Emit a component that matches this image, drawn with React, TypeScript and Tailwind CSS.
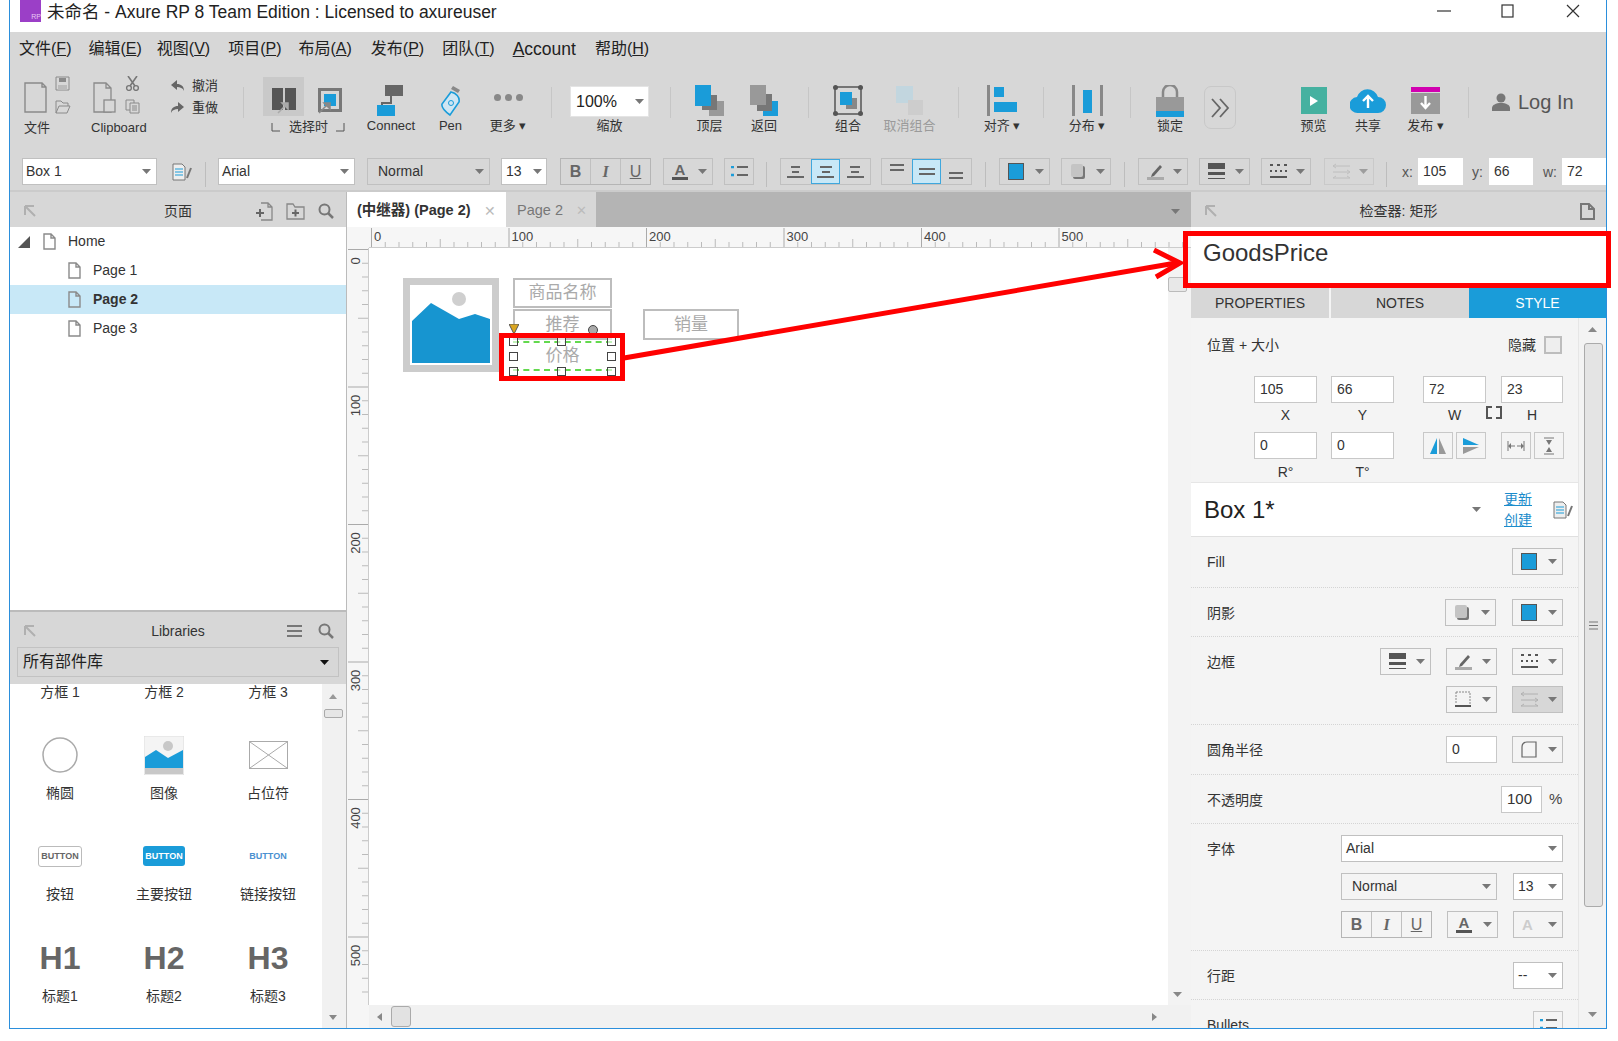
import * as React from "react"

const BLUE = "#1a9cd9"

function Svg({ w, h, children, className }: { w: number; h: number; children: React.ReactNode; className?: string }) {
    return (
        <svg width={w} height={h} viewBox={`0 0 ${w} ${h}`} fill="none" className={`shrink-0 ${className ?? ""}`}>
            {children}
        </svg>
    )
}

function Caret({ color = "#777" }: { color?: string }) {
    return (
        <Svg w={9} h={5}>
            <path d="M0 0h9L4.5 5z" fill={color} />
        </Svg>
    )
}

function Page({ w = 13, h = 17, color = "#8a8a8a" }: { w?: number; h?: number; color?: string }) {
    return (
        <Svg w={w} h={h}>
            <path d={`M1 1h${w - 6}l4 4v${h - 6}H1z M${w - 5} 1v4h4`} stroke={color} strokeWidth={1.4} />
        </Svg>
    )
}

function Sep() {
    return <div className="mt-[25px] h-[31px] w-px shrink-0 bg-[#c6c6c6]" />
}

function Tool({ className, icon, label, dim }: { className: string; icon: React.ReactNode; label: React.ReactNode; dim?: boolean }) {
    return (
        <div className={`flex shrink-0 flex-col items-center ${className}`}>
            <div className="mt-[23px] flex h-[31px] items-center justify-center">{icon}</div>
            <div className={`mt-px text-[13px] leading-[18px] whitespace-nowrap ${dim ? "text-[#9a9a9a]" : "text-[#333]"}`}>{label}</div>
        </div>
    )
}

function Drop({ className, children }: { className?: string; children?: React.ReactNode }) {
    return (
        <div className={`flex h-[27px] shrink-0 items-center justify-between border border-[#c0c0c0] pr-[5px] pl-[8px] ${className ?? ""}`}>
            <div className="flex items-center">{children}</div>
            <Caret />
        </div>
    )
}

function TextBox({ className, children }: { className?: string; children?: React.ReactNode }) {
    return <div className={`flex h-[27px] shrink-0 items-center border border-[#c8c8c8] bg-white pl-[5px] text-[14px] text-[#333] ${className ?? ""}`}>{children}</div>
}

function FillSwatch() {
    return <div className="h-[17px] w-[16px] border border-[#555] bg-[#1a9cd9]" />
}

function ShadowIcon() {
    return (
        <Svg w={16} h={17}>
            <rect x="3" y="3" width="12" height="13" rx="2" fill="#777" />
            <rect x="1" y="1" width="12" height="13" rx="2" fill="#c4c4c4" />
        </Svg>
    )
}

function PenIcon() {
    return (
        <Svg w={17} h={17}>
            <path d="M5 11l8-9 2 2-8 9-3 1z" fill="#666" />
            <rect x="0" y="14" width="17" height="3" fill="#aaa" />
        </Svg>
    )
}

function ThickIcon() {
    return (
        <Svg w={17} h={17}>
            <rect width="17" height="6" fill="#555" />
            <rect y="9" width="17" height="3" fill="#555" />
            <rect y="15" width="17" height="1" fill="#555" />
        </Svg>
    )
}

function DashIcon() {
    return (
        <Svg w={17} h={17}>
            <path d="M0 2h3M7 2h3M14 2h3M0 8h2M5 8h2M10 8h2M15 8h2" stroke="#555" strokeWidth="2" />
            <path d="M0 14h17" stroke="#555" strokeWidth="2" />
        </Svg>
    )
}

function ArrowsIcon({ color = "#b0b0b0" }: { color?: string }) {
    return (
        <Svg w={17} h={17}>
            <path d="M0 3h17M0 9h17M0 15h17M0 3l3-2M0 3l3 2M17 9l-3-2M17 9l-3 2M0 15l3-2M17 15l-3-2" stroke={color} />
        </Svg>
    )
}

function EditDoc() {
    return (
        <Svg w={20} h={18}>
            <path d="M1 1h9l3 3v13H1z" stroke="#777" fill="#eee" />
            <path d="M3 6h8M3 9h8M3 12h8" stroke={BLUE} />
            <path d="M19 5l-4 10" stroke="#777" strokeWidth="2" />
        </Svg>
    )
}

function Lines({ rows, active }: { rows: number[]; active?: boolean }) {
    return (
        <div className={`flex h-full w-full flex-col items-center justify-center gap-[3px] ${active ? "border border-[#3fa7dd] bg-[#c8e8f7]" : ""}`}>
            {rows.map((w, i) => (
                <div key={i} style={{ width: w }} className="h-[2px] bg-[#666]" />
            ))}
        </div>
    )
}

function TitleBar() {
    return (
        <div className="flex h-8 shrink-0 items-center bg-white">
            <div className="mb-[10px] ml-[10px] flex h-[22px] w-[21px] items-end justify-end bg-[#9b3fc7] text-[7px] leading-[10px] text-[#e8c8f5]">RP</div>
            <span className="mb-[8px] ml-[6px] text-[17.500px] text-[#222]">未命名 - Axure RP 8 Team Edition : Licensed to axureuser</span>
            <div className="ml-auto flex items-center pr-[26px] pb-[10px]">
                <Svg w={14} h={14}>
                    <path d="M0 7h14" stroke="#333" strokeWidth="1.2" />
                </Svg>
                <Svg w={13} h={14} className="ml-[50px]">
                    <rect x="1" y="1" width="11" height="12" stroke="#333" strokeWidth="1.2" />
                </Svg>
                <Svg w={14} h={14} className="ml-[52px]">
                    <path d="M1 1l12 12M13 1L1 13" stroke="#333" strokeWidth="1.2" />
                </Svg>
            </div>
        </div>
    )
}

function MenuBar() {
    const items: [string, string, string, string][] = [
        ["文件(", "F", ")", "ml-[9px]"],
        ["编辑(", "E", ")", "ml-[17px]"],
        ["视图(", "V", ")", "ml-[15px]"],
        ["项目(", "P", ")", "ml-[18px]"],
        ["布局(", "A", ")", "ml-[17px]"],
        ["发布(", "P", ")", "ml-[19px]"],
        ["团队(", "T", ")", "ml-[18px]"],
    ]
    return (
        <div className="flex h-[30px] shrink-0 items-center bg-[#d7d7d7] pt-[4px] text-[16px] text-[#222]">
            {items.map(([a, b, c, m]) => (
                <span key={a} className={m}>
                    {a}
                    <u>{b}</u>
                    {c}
                </span>
            ))}
            <span className="ml-[18px] text-[17.500px]">
                <u>A</u>ccount
            </span>
            <span className="ml-[19px]">
                帮助(<u>H</u>)
            </span>
        </div>
    )
}

function Toolbar() {
    return (
        <div className="flex h-[88px] shrink-0 bg-[#d7d7d7]">
            <div className="ml-[14px] flex w-[47px] shrink-0 flex-col">
                <div className="mt-[14px] flex h-[40px] justify-between">
                    <div className="mt-[6px]">
                        <Page w={23} h={31} />
                    </div>
                    <div className="flex flex-col gap-[8px]">
                        <Svg w={15} h={15}>
                            <path d="M1 1h13v13H1z" stroke="#8a8a8a" />
                            <rect x="4" y="2" width="7" height="4" fill="#8a8a8a" />
                            <rect x="3" y="9" width="9" height="5" fill="#bbb" />
                        </Svg>
                        <Svg w={16} h={15}>
                            <path d="M1 14V2h5l2 2h5v3M1 14l3-7h11l-3 7z" stroke="#8a8a8a" />
                        </Svg>
                    </div>
                </div>
                <div className="mt-[3px] text-[13px] leading-[18px] text-[#333]">文件</div>
            </div>

            <div className="ml-[20px] flex w-[60px] shrink-0 flex-col">
                <div className="mt-[14px] flex h-[40px] pl-[2px]">
                    <div className="mt-[6px] mr-[9px]">
                        <Svg w={23} h={31}>
                            <path d="M1 1h12l5 5v24H1z M13 1v5h5" stroke="#8a8a8a" strokeWidth="1.3" />
                            <rect x="11" y="18" width="11" height="12" fill="#d7d7d7" stroke="#8a8a8a" strokeWidth="1.3" />
                        </Svg>
                    </div>
                    <div className="flex flex-col gap-[8px]">
                        <Svg w={15} h={15}>
                            <path d="M3 0l7 10M12 0L5 10" stroke="#777" strokeWidth="1.6" />
                            <circle cx="4" cy="12" r="2.4" stroke="#777" strokeWidth="1.4" />
                            <circle cx="11" cy="12" r="2.4" stroke="#777" strokeWidth="1.4" />
                        </Svg>
                        <Svg w={15} h={15}>
                            <path d="M1 1h8v10H1z" stroke="#8a8a8a" />
                            <path d="M5 4h9v10H5z" fill="#d7d7d7" stroke="#8a8a8a" />
                            <path d="M7 7h5M7 9h5M7 11h5" stroke="#8a8a8a" />
                        </Svg>
                    </div>
                </div>
                <div className="mt-[3px] text-[13px] leading-[18px] text-[#333]">Clipboard</div>
            </div>

            <div className="ml-[19px] flex w-[50px] shrink-0 flex-col gap-[7px] pt-[16px] text-[13px] leading-[15px] text-[#333]">
                <div className="flex items-center gap-[7px]">
                    <Svg w={15} h={13}>
                        <path d="M7 1L1 6l6 5V8c3 0 6 1 7 4 0-5-3-7-7-7z" fill="#666" />
                    </Svg>
                    撤消
                </div>
                <div className="flex items-center gap-[7px]">
                    <Svg w={15} h={13}>
                        <path d="M8 1l6 5-6 5V8c-3 0-6 1-7 4 0-5 3-7 7-7z" fill="#666" />
                    </Svg>
                    重做
                </div>
            </div>

            <div className="ml-[23px]">
                <Sep />
            </div>

            <div className="ml-[19px] flex w-[83px] shrink-0 flex-col">
                <div className="mt-[15px] flex h-[39px] items-end">
                    <div className="flex h-[39px] w-[41px] items-end justify-center bg-[#c9c9c9] pb-[2px]">
                        <Svg w={24} h={26}>
                            <rect width="11" height="22" fill="#555" />
                            <rect x="13" width="11" height="22" fill="#555" />
                            <path d="M6 25l9-9M10 15h6v6z" stroke="#aaa" strokeWidth="1.5" fill="#aaa" />
                        </Svg>
                    </div>
                    <div className="ml-[14px] pb-[2px]">
                        <Svg w={24} h={26}>
                            <rect x="1.5" y="1.5" width="21" height="21" stroke="#777" strokeWidth="3" />
                            <rect x="6" y="6" width="12" height="12" fill={BLUE} />
                            <path d="M1 25l9-9M6 15h6v6z" stroke="#888" strokeWidth="1.5" fill="#888" />
                        </Svg>
                    </div>
                </div>
                <div className="mt-[2px] flex items-center justify-between pl-[8px] text-[13px] leading-[18px] text-[#333]">
                    <Svg w={10} h={10}>
                        <path d="M1 1v8h8" stroke="#555" />
                    </Svg>
                    选择时
                    <Svg w={10} h={10}>
                        <path d="M0 9h8V1" stroke="#555" />
                    </Svg>
                </div>
            </div>

            <Tool
                className="ml-[20px] w-[50px]"
                label="Connect"
                icon={
                    <Svg w={28} h={31}>
                        <rect x="8" width="18" height="11" fill="#666" />
                        <path d="M14 11v7H5v3" stroke="#666" strokeWidth="2" />
                        <rect y="20" width="18" height="11" fill={BLUE} />
                    </Svg>
                }
            />
            <Tool
                className="ml-[23px] w-[23px]"
                label="Pen"
                icon={
                    <Svg w={20} h={31}>
                        <path d="M10 7c5 1 9 5 8 10l-9 13c-4-3-9-7-8-11z" stroke={BLUE} strokeWidth="1.6" fill="#cfe6f3" />
                        <circle cx="10" cy="18" r="2.5" stroke={BLUE} />
                        <path d="M12 1l7 4-2 3-7-4z" fill="#888" />
                    </Svg>
                }
            />
            <Tool
                className="ml-[28px] w-[36px]"
                label="更多 ▾"
                icon={
                    <div className="mb-[6px] flex gap-[4px]">
                        <div className="size-[7px] rounded-full bg-[#888]" />
                        <div className="size-[7px] rounded-full bg-[#888]" />
                        <div className="size-[7px] rounded-full bg-[#888]" />
                    </div>
                }
            />
            <div className="ml-[25px]">
                <Sep />
            </div>
            <div className="ml-[19px] flex w-[77px] shrink-0 flex-col items-center">
                <div className="mt-[25px] flex h-[29px] w-full items-center justify-between bg-white pr-[4px] pl-[5px] text-[16px] text-[#222] shadow-[0_0_0_1px_#e4e4e4]">
                    100%
                    <Caret />
                </div>
                <div className="mt-px text-[13px] leading-[18px] text-[#333]">缩放</div>
            </div>
            <div className="ml-[22px]">
                <Sep />
            </div>
            <Tool
                className="ml-[24px] w-[29px]"
                label="顶层"
                icon={
                    <Svg w={29} h={31}>
                        <rect x="14" y="16" width="15" height="15" fill="#999" />
                        <rect x="7" y="10" width="15" height="15" fill="#777" />
                        <rect width="16" height="21" fill={BLUE} />
                    </Svg>
                }
            />
            <Tool
                className="ml-[26px] w-[28px]"
                label="返回"
                icon={
                    <Svg w={28} h={31}>
                        <rect x="13" y="16" width="15" height="15" fill={BLUE} />
                        <rect x="7" y="9" width="15" height="17" fill="#777" />
                        <rect width="16" height="20" fill="#999" />
                    </Svg>
                }
            />
            <div className="ml-[30px]">
                <Sep />
            </div>
            <Tool
                className="ml-[24px] w-[30px]"
                label="组合"
                icon={
                    <Svg w={30} h={31}>
                        <rect x="2" y="2" width="26" height="27" stroke="#555" strokeWidth="1.5" />
                        <circle cx="2.5" cy="2.5" r="2.5" fill="#555" />
                        <circle cx="27.5" cy="2.5" r="2.5" fill="#555" />
                        <circle cx="2.5" cy="28.5" r="2.5" fill="#555" />
                        <circle cx="27.5" cy="28.5" r="2.5" fill="#555" />
                        <rect x="13" y="13" width="11" height="11" fill="#888" />
                        <rect x="7" y="7" width="12" height="13" fill={BLUE} />
                    </Svg>
                }
            />
            <Tool
                className="ml-[20px] w-[53px]"
                label="取消组合"
                dim
                icon={
                    <Svg w={30} h={31}>
                        <rect x="1" y="1" width="17" height="17" fill="#c2d6df" />
                        <rect x="13" y="15" width="15" height="15" fill="#cdcdcd" />
                    </Svg>
                }
            />
            <div className="ml-[22px]">
                <Sep />
            </div>
            <Tool
                className="ml-[24px] w-[38px]"
                label="对齐 ▾"
                icon={
                    <Svg w={30} h={31}>
                        <rect width="3" height="31" fill="#888" />
                        <rect x="7" y="2" width="10" height="10" fill={BLUE} />
                        <rect x="7" y="17" width="23" height="10" fill={BLUE} />
                    </Svg>
                }
            />
            <div className="ml-[22px]">
                <Sep />
            </div>
            <Tool
                className="ml-[24px] w-[38px]"
                label="分布 ▾"
                icon={
                    <Svg w={31} h={31}>
                        <rect width="3" height="31" fill="#888" />
                        <rect x="28" width="3" height="31" fill="#888" />
                        <rect x="11" y="5" width="9" height="23" fill={BLUE} />
                    </Svg>
                }
            />
            <div className="ml-[24px]">
                <Sep />
            </div>
            <Tool
                className="ml-[25px] w-[28px]"
                label="锁定"
                icon={
                    <Svg w={28} h={32}>
                        <path d="M7 12V7a7 7 0 0 1 14 0v5" stroke="#888" strokeWidth="2.5" />
                        <rect y="12" width="28" height="14" fill="#999" />
                        <rect y="26" width="28" height="6" fill={BLUE} />
                    </Svg>
                }
            />
            <div className="mt-[24px] ml-[20px] flex h-[43px] w-[32px] shrink-0 items-center justify-center rounded-[7px] border border-[#c8c8c8]">
                <Svg w={20} h={20}>
                    <path d="M2 1l8 9-8 9M10 1l8 9-8 9" stroke="#666" strokeWidth="1.8" />
                </Svg>
            </div>
            <Tool
                className="ml-[64px] w-[27px]"
                label="预览"
                icon={
                    <div className="flex h-[27px] w-[26px] items-center justify-center bg-[#45b1a0]">
                        <Svg w={8} h={10}>
                            <path d="M0 0l8 5-8 5z" fill="#fff" />
                        </Svg>
                    </div>
                }
            />
            <Tool
                className="ml-[23px] w-[36px]"
                label="共享"
                icon={
                    <Svg w={36} h={27}>
                        <path d="M8 26a8 8 0 0 1-1-16 11 11 0 0 1 21 0 8 8 0 0 1 0 16z" fill={BLUE} />
                        <path d="M18 21v-11M13 14l5-5 5 5" stroke="#fff" strokeWidth="2.4" />
                    </Svg>
                }
            />
            <Tool
                className="ml-[21px] w-[37px]"
                label="发布 ▾"
                icon={
                    <Svg w={29} h={27}>
                        <rect width="29" height="5" fill="#d100b0" />
                        <rect y="6" width="29" height="21" fill="#999" />
                        <path d="M14.5 9v12M10 16l4.500 5 4.500-5" stroke="#fff" strokeWidth="2.4" />
                    </Svg>
                }
            />
            <div className="ml-[24px]">
                <Sep />
            </div>
            <div className="mt-[30px] ml-[23px] flex h-[20px] items-center gap-[8px] text-[20px] text-[#555]">
                <Svg w={18} h={18}>
                    <circle cx="9" cy="5" r="4.500" fill="#777" />
                    <path d="M0 18v-3c0-3 4-5 9-5s9 2 9 5v3z" fill="#777" />
                </Svg>
                Log In
            </div>
        </div>
    )
}

function FormatSep({ className }: { className: string }) {
    return <div className={`h-[25px] w-px shrink-0 self-center bg-[#bdbdbd] ${className}`} />
}

function BIU({ className }: { className: string }) {
    return (
        <div className={`flex h-[27px] shrink-0 divide-x divide-[#c0c0c0] border border-[#b5b5b5] text-[16px] text-[#666] ${className}`}>
            <div className="flex flex-1 items-center justify-center font-bold">B</div>
            <div className="flex flex-1 items-center justify-center font-['Liberation_Serif',serif] font-bold italic">I</div>
            <div className="flex flex-1 items-center justify-center underline">U</div>
        </div>
    )
}

function ColorA({ dim }: { dim?: boolean }) {
    return (
        <div className="flex flex-col items-center">
            <span className={`text-[15px] leading-[14px] font-bold ${dim ? "text-[#ccc]" : "text-[#666]"}`}>A</span>
            {!dim && <div className="h-[3px] w-[16px] bg-[#555]" />}
        </div>
    )
}

function FormatBar() {
    return (
        <div className="flex h-[42px] shrink-0 items-start border-b-2 border-[#cbcbcb] bg-[#d7d7d7] pt-[8px] text-[14px] text-[#333]">
            <Drop className="ml-[12px] w-[135px] !bg-white !pl-[3px]">Box 1</Drop>
            <div className="mt-[5px] ml-[15px]">
                <EditDoc />
            </div>
            <FormatSep className="ml-[13px]" />
            <Drop className="ml-[12px] w-[137px] bg-white !pl-[3px]">Arial</Drop>
            <Drop className="ml-[12px] w-[123px] !pl-[10px]">Normal</Drop>
            <Drop className="ml-[11px] w-[46px] bg-white !pr-[4px] !pl-[4px]">13</Drop>
            <BIU className="ml-[13px] w-[91px]" />
            <Drop className="ml-[12px] w-[50px]">
                <ColorA />
            </Drop>
            <div className="ml-[11px] flex h-[27px] w-[30px] shrink-0 items-center justify-center border border-[#c0c0c0]">
                <Svg w={17} h={12}>
                    <path d="M0 1h3M0 9h3" stroke={BLUE} strokeWidth="2.5" />
                    <path d="M6 1h11M6 9h11" stroke="#666" strokeWidth="2" />
                </Svg>
            </div>
            <FormatSep className="ml-[12px]" />
            <div className="ml-[13px] flex h-[27px] w-[91px] shrink-0 border border-[#c0c0c0]">
                <div className="w-[30px]">
                    <Lines rows={[9, 7, 17]} />
                </div>
                <div className="w-[30px]">
                    <Lines rows={[12, 8, 17]} active />
                </div>
                <div className="w-[30px]">
                    <Lines rows={[10, 8, 17]} />
                </div>
            </div>
            <div className="ml-[10px] flex h-[27px] w-[91px] shrink-0 border border-[#c0c0c0]">
                <div className="w-[30px] pb-[8px]">
                    <Lines rows={[14, 14]} />
                </div>
                <div className="w-[30px]">
                    <Lines rows={[16, 16]} active />
                </div>
                <div className="w-[30px] pt-[8px]">
                    <Lines rows={[14, 14]} />
                </div>
            </div>
            <FormatSep className="ml-[13px]" />
            <Drop className="ml-[13px] w-[51px]">
                <FillSwatch />
            </Drop>
            <Drop className="ml-[11px] w-[50px]">
                <ShadowIcon />
            </Drop>
            <FormatSep className="ml-[13px]" />
            <Drop className="ml-[13px] w-[50px]">
                <PenIcon />
            </Drop>
            <Drop className="ml-[11px] w-[51px]">
                <ThickIcon />
            </Drop>
            <Drop className="ml-[11px] w-[50px]">
                <DashIcon />
            </Drop>
            <Drop className="ml-[13px] w-[50px] opacity-60">
                <ArrowsIcon />
            </Drop>
            <FormatSep className="ml-[12px]" />
            <span className="mt-[4px] ml-[15px] w-[16px] text-[#555]">x:</span>
            <TextBox className="w-[45px] border-none">105</TextBox>
            <span className="mt-[4px] ml-[9px] w-[17px] text-[#555]">y:</span>
            <TextBox className="w-[44px] border-none">66</TextBox>
            <span className="mt-[4px] ml-[10px] w-[19px] text-[#555]">w:</span>
            <TextBox className="w-[44px] border-none">72</TextBox>
        </div>
    )
}

function PanelHead({ title, children }: { title: string; children?: React.ReactNode }) {
    return (
        <div className="relative flex h-[35px] shrink-0 items-center bg-[#d7d7d7] pt-[3px] pl-[14px] text-[14px] text-[#333]">
            <Svg w={12} h={12}>
                <path d="M1 1h9M1 1v9M1 1l10 10" stroke="#b0b0b0" strokeWidth="2" />
            </Svg>
            {children}
            <span className="absolute inset-x-0 top-[9px] text-center">{title}</span>
        </div>
    )
}

function TreeRow({ label, selected }: { label: string; selected?: boolean }) {
    return (
        <div className={`flex h-[29px] items-center pl-[58px] text-[14px] text-[#333] ${selected ? "bg-[#c8e8f7] font-bold" : ""}`}>
            <Page />
            <span className="ml-[12px]">{label}</span>
        </div>
    )
}

function Search() {
    return (
        <Svg w={16} h={16}>
            <circle cx="6.500" cy="6.500" r="5" stroke="#777" strokeWidth="2" />
            <path d="M10 10l5 5" stroke="#777" strokeWidth="2.500" />
        </Svg>
    )
}

function Widget({ icon, label }: { icon?: React.ReactNode; label: string }) {
    return (
        <div className="flex flex-col items-center">
            {icon && <div className="flex h-[36px] items-center justify-center">{icon}</div>}
            <div className={`text-[14px] leading-[16px] text-[#333] ${icon ? "mt-[12px]" : ""}`}>{label}</div>
        </div>
    )
}

function LeftPanel() {
    const cols = "ml-[-2px] grid w-[312px] grid-cols-3"
    const h = "text-[32px] leading-[36px] font-bold text-[#666]"
    return (
        <div className="flex w-[336px] shrink-0 flex-col">
            <PanelHead title="页面">
                <div className="absolute right-[12px] z-1 flex items-center gap-[13px]">
                    <Svg w={17} h={19}>
                        <path d="M5 1h7l4 4v13H5M12 1v4h4" stroke="#888" strokeWidth="1.3" />
                        <path d="M0 11h8M4 7v8" stroke="#666" strokeWidth="2" />
                    </Svg>
                    <Svg w={19} h={17}>
                        <path d="M1 16V1h6l2 3h9v12z" stroke="#888" strokeWidth="1.3" />
                        <path d="M6 10h7M9.500 6.500v7" stroke="#666" strokeWidth="2" />
                    </Svg>
                    <Search />
                </div>
            </PanelHead>
            <div className="flex-1 bg-white">
                <div className="flex h-[29px] items-center pl-[8px] text-[14px] text-[#333]">
                    <Svg w={12} h={12}>
                        <path d="M12 0v12H0z" fill="#555" />
                    </Svg>
                    <div className="ml-[13px]">
                        <Page />
                    </div>
                    <span className="ml-[12px]">Home</span>
                </div>
                <TreeRow label="Page 1" />
                <TreeRow label="Page 2" selected />
                <TreeRow label="Page 3" />
            </div>
            <div className="relative flex h-[74px] shrink-0 flex-col border-t-2 border-[#bbb] bg-[#d7d7d7]">
                <PanelHead title="Libraries">
                    <div className="absolute right-[12px] z-1 flex items-center gap-[16px]">
                        <Svg w={15} h={14}>
                            <path d="M0 2h15M0 7h15M0 12h15" stroke="#777" strokeWidth="2.200" />
                        </Svg>
                        <Search />
                    </div>
                </PanelHead>
                <div className="mx-[7px] flex h-[30px] items-center justify-between border border-[#c2c2c2] pr-[9px] pl-[5px] text-[16px] text-[#222]">
                    所有部件库
                    <Caret color="#111" />
                </div>
            </div>
            <div className="flex h-[344px] shrink-0 bg-white">
                <div className="w-[312px] overflow-hidden">
                    <div className={`${cols} h-[53px]`}>
                        <Widget label="方框 1" />
                        <Widget label="方框 2" />
                        <Widget label="方框 3" />
                    </div>
                    <div className={`${cols} h-[101px]`}>
                        <Widget
                            label="椭圆"
                            icon={
                                <Svg w={36} h={36}>
                                    <circle cx="18" cy="18" r="17" stroke="#aaa" strokeWidth="1.500" />
                                </Svg>
                            }
                        />
                        <Widget
                            label="图像"
                            icon={
                                <Svg w={40} h={39}>
                                    <rect width="40" height="39" fill="#f4f4f4" stroke="#ddd" />
                                    <circle cx="24" cy="10" r="5" fill="#c8c8c8" />
                                    <path d="M1 21l11-7 12 8 15-8v18H1z" fill={BLUE} />
                                    <rect x="1" y="32" width="38" height="6" fill="#c8c8c8" />
                                </Svg>
                            }
                        />
                        <Widget
                            label="占位符"
                            icon={
                                <Svg w={39} h={28}>
                                    <rect x="0.500" y="0.500" width="38" height="27" stroke="#aaa" />
                                    <path d="M1 1l37 26M38 1L1 27" stroke="#aaa" />
                                </Svg>
                            }
                        />
                    </div>
                    <div className={`${cols} h-[102px]`}>
                        <Widget label="按钮" icon={<div className="rounded-[3px] border border-[#bbb] px-[2px] text-[9px] leading-[19px] font-bold text-[#666]">BUTTON</div>} />
                        <Widget label="主要按钮" icon={<div className="rounded-[3px] bg-[#1a9cd9] px-[2px] text-[9px] leading-[20px] font-bold text-white">BUTTON</div>} />
                        <Widget label="链接按钮" icon={<div className="text-[9px] leading-[20px] font-bold text-[#4a90d0]">BUTTON</div>} />
                    </div>
                    <div className={cols}>
                        <Widget label="标题1" icon={<span className={h}>H1</span>} />
                        <Widget label="标题2" icon={<span className={h}>H2</span>} />
                        <Widget label="标题3" icon={<span className={h}>H3</span>} />
                    </div>
                </div>
                <div className="relative flex-1 bg-[#f1f1f1]">
                    <div className="absolute top-[10px] left-[7px]">
                        <Svg w={8} h={5}>
                            <path d="M0 5h8L4 0z" fill="#999" />
                        </Svg>
                    </div>
                    <div className="absolute top-[25px] left-[2px] h-[9px] w-[19px] rounded-[2px] border border-[#aaa] bg-[#e6e6e6]" />
                    <div className="absolute top-[331px] left-[7px]">
                        <Svg w={8} h={5}>
                            <path d="M0 0h8L4 5z" fill="#888" />
                        </Svg>
                    </div>
                </div>
            </div>
        </div>
    )
}

function HRuler() {
    const ticks = Array.from({ length: 60 }, (_, i) => i)
    return (
        <svg width={844} height={21} className="block shrink-0 bg-[#f6f6f6]">
            {ticks.map((i) => {
                const x = 24.5 + i * 13.75
                const long = i % 10 === 0
                const mid = i % 5 === 0
                return <path key={i} d={`M${x} ${long ? 1 : mid ? 12 : 15}V20`} stroke={long ? "#aaa" : "#bbb"} />
            })}
            {[0, 100, 200, 300, 400, 500].map((n, i) => (
                <text key={n} x={27 + i * 137.5} y={14} fontSize={13} fill="#444">
                    {n}
                </text>
            ))}
            <path d="M22 20.500H844" stroke="#ccc" />
        </svg>
    )
}

function VRuler() {
    const ticks = Array.from({ length: 57 }, (_, i) => i)
    return (
        <svg width={22} height={757} className="block shrink-0 bg-[#f6f6f6]">
            {ticks.map((i) => {
                const y = 1.5 + i * 13.75
                const long = i % 10 === 0
                const mid = i % 5 === 0
                return <path key={i} d={`M${long ? 1 : mid ? 11 : 15} ${y}H21`} stroke={long ? "#aaa" : "#bbb"} />
            })}
            {[0, 100, 200, 300, 400, 500].map((n) => {
                const y = n === 0 ? 13 : 20 + n * 1.375
                return (
                    <text key={n} x={0} y={0} fontSize={13} fill="#444" textAnchor="middle" transform={`translate(13 ${y}) rotate(-90)`}>
                        {n}
                    </text>
                )
            })}
            <path d="M21.500 0V757" stroke="#ccc" />
        </svg>
    )
}

function Handle({ className }: { className: string }) {
    return <div className={`absolute size-[9px] border border-[#444] bg-white/60 ${className}`} />
}

function CanvasBox({ className, children }: { className: string; children: React.ReactNode }) {
    return <div className={`absolute flex items-center justify-center border-2 border-[#bdbdbd] bg-white text-[17px] text-[#aaa] ${className}`}>{children}</div>
}

function Canvas() {
    return (
        <div className="flex w-[845px] shrink-0 flex-col border-l border-[#bbb]">
            <div className="flex h-[35px] shrink-0 items-stretch bg-[#b4b4b4] text-[14.500px]">
                <div className="flex w-[159px] items-center justify-between bg-white pt-[3px] pr-[10px] pl-[10px] font-bold text-[#333]">
                    (中继器) (Page 2)
                    <span className="text-[14px] font-normal text-[#bbb]">✕</span>
                </div>
                <div className="flex w-[90px] items-center justify-between bg-[#d7d7d7] pt-[3px] pr-[9px] pl-[11px] text-[#777]">
                    Page 2
                    <span className="text-[13px] text-[#bbb]">✕</span>
                </div>
                <div className="flex flex-1 items-center justify-end pt-[3px] pr-[11px]">
                    <Caret />
                </div>
            </div>
            <HRuler />
            <div className="flex min-h-0 flex-1">
                <VRuler />
                <div className="relative flex-1 bg-white">
                    <div className="absolute top-[30px] left-[34px] h-[94px] w-[96px] border-[7px] border-[#cccccc] bg-white">
                        <Svg w={82} h={80}>
                            <circle cx="49" cy="14" r="7" fill="#cfcfcf" />
                            <path d="M2 36L21 18L49 34L65 29L80 34V78H2z" fill="#1795d0" />
                        </Svg>
                    </div>
                    <CanvasBox className="top-[30px] left-[144px] h-[30px] w-[99px]">商品名称</CanvasBox>
                    <CanvasBox className="top-[61px] left-[144px] h-[31px] w-[99px]">推荐</CanvasBox>
                    <CanvasBox className="top-[61px] left-[274px] h-[31px] w-[96px]">销量</CanvasBox>
                    <div className="absolute top-[93px] left-[144px] flex h-[30px] w-[99px] items-center justify-center border-y-2 border-dashed border-[#63d94e] bg-white text-[17px] text-[#aaa]">
                        价格
                    </div>
                    <Svg w={10} h={10} className="absolute top-[76px] left-[140px]">
                        <path d="M0 0h10L5 10z" fill="#d9a520" stroke="#555" />
                    </Svg>
                    <div className="absolute top-[77px] left-[219px] size-[10px] rounded-full border border-[#444] bg-[#aaa]" />
                    <Handle className="top-[89px] left-[140px]" />
                    <Handle className="top-[89px] left-[188px]" />
                    <Handle className="top-[89px] left-[238px]" />
                    <Handle className="top-[104px] left-[140px]" />
                    <Handle className="top-[104px] left-[238px]" />
                    <Handle className="top-[119px] left-[140px]" />
                    <Handle className="top-[119px] left-[188px]" />
                    <Handle className="top-[119px] left-[238px]" />
                    <div className="absolute top-[85px] left-[130px] h-[48px] w-[126px] border-[5px] border-[#ff0000]" />
                </div>
                <div className="relative w-[23px] shrink-0 bg-[#f3f3f3]">
                    <div className="absolute top-[29px] left-0 h-[15px] w-[19px] rounded-[2px] border border-[#bbb] bg-[#e8e8e8]" />
                    <div className="absolute top-[744px] left-[5px]">
                        <Caret color="#888" />
                    </div>
                </div>
            </div>
            <div className="flex h-[23px] shrink-0 bg-[#f1f1f1]">
                <div className="w-[22px] shrink-0 bg-[#f6f6f6]" />
                <div className="flex flex-1 items-center pl-[8px]">
                    <Svg w={5} h={8}>
                        <path d="M5 0v8L0 4z" fill="#888" />
                    </Svg>
                    <div className="ml-[9px] h-[21px] w-[20px] rounded-[3px] border border-[#aaa] bg-[#e2e2e2]" />
                    <div className="ml-auto pr-[34px]">
                        <Svg w={5} h={8}>
                            <path d="M0 0v8l5-4z" fill="#888" />
                        </Svg>
                    </div>
                </div>
            </div>
        </div>
    )
}

function Section({ className, label, children }: { className: string; label: string; children?: React.ReactNode }) {
    return (
        <div className={`relative border-b border-dotted border-[#d4d4d4] pt-[11px] pr-[15px] ${className}`}>
            <span className="absolute top-[16px] left-[16px] text-[14px] leading-[18px] text-[#333]">{label}</span>
            {children}
        </div>
    )
}

function IconBtn({ children }: { children: React.ReactNode }) {
    return <div className="flex h-[27px] w-[30px] shrink-0 items-center justify-center border border-[#c8c8c8]">{children}</div>
}

function FieldLabel({ className, children }: { className: string; children: React.ReactNode }) {
    return <div className={`shrink-0 text-center text-[14px] leading-[18px] text-[#333] ${className}`}>{children}</div>
}

function RightPanel() {
    return (
        <div className="flex w-[415px] shrink-0 flex-col bg-[#f4f4f4]">
            <PanelHead title="检查器: 矩形">
                <div className="absolute right-[11px] z-1">
                    <Svg w={15} h={17}>
                        <path d="M1 1h8l5 5v10H1zM9 1v5h5" stroke="#777" strokeWidth="2" />
                    </Svg>
                </div>
            </PanelHead>
            <div className="flex h-[61px] shrink-0 items-start bg-white pt-[9px] pl-[12px] text-[24px] leading-[34px] text-[#333]">GoodsPrice</div>
            <div className="flex h-[30px] shrink-0 text-[14px]">
                <div className="flex w-[138px] items-center justify-center bg-[#d7d7d7] text-[#333]">PROPERTIES</div>
                <div className="ml-[2px] flex w-[138px] items-center justify-center bg-[#d7d7d7] text-[#333]">NOTES</div>
                <div className="flex flex-1 items-center justify-center bg-[#1a9cd9] text-white">STYLE</div>
            </div>
            <div className="flex min-h-0 flex-1">
                <div className="h-full w-[387px] shrink-0 overflow-hidden">
                    <div className="h-[165px] border-b border-[#e6e6e6]">
                        <div className="flex h-[36px] items-end pr-[16px] pl-[16px] text-[14px] leading-[18px] text-[#333]">
                            <span>位置 + 大小</span>
                            <span className="mr-[8px] ml-auto">隐藏</span>
                            <div className="size-[18px] border-2 border-[#bdbdbd] bg-[#eee]" />
                        </div>
                        <div className="mt-[22px] flex pl-[63px]">
                            <TextBox className="w-[63px]">105</TextBox>
                            <TextBox className="ml-[14px] w-[63px]">66</TextBox>
                            <TextBox className="ml-[29px] w-[63px]">72</TextBox>
                            <TextBox className="ml-[15px] w-[62px]">23</TextBox>
                        </div>
                        <div className="mt-[3px] flex pl-[63px]">
                            <FieldLabel className="w-[63px]">X</FieldLabel>
                            <FieldLabel className="ml-[14px] w-[63px]">Y</FieldLabel>
                            <FieldLabel className="ml-[29px] w-[63px]">W</FieldLabel>
                            <div className="flex w-[15px] shrink-0 justify-center">
                                <Svg w={16} h={13}>
                                    <path d="M6 1H1v11h5M10 1h5v11h-5" stroke="#555" strokeWidth="2" />
                                </Svg>
                            </div>
                            <FieldLabel className="w-[62px]">H</FieldLabel>
                        </div>
                        <div className="mt-[8px] flex pl-[63px]">
                            <TextBox className="w-[63px]">0</TextBox>
                            <TextBox className="ml-[14px] w-[63px]">0</TextBox>
                            <div className="ml-[29px]">
                                <IconBtn>
                                    <Svg w={18} h={18}>
                                        <path d="M8 1v16H1z" fill={BLUE} />
                                        <path d="M10 1v16h7z" fill="#999" />
                                    </Svg>
                                </IconBtn>
                            </div>
                            <div className="ml-[3px]">
                                <IconBtn>
                                    <Svg w={18} h={18}>
                                        <path d="M1 8h16L1 1z" fill={BLUE} />
                                        <path d="M1 10h16L1 17z" fill="#999" />
                                    </Svg>
                                </IconBtn>
                            </div>
                            <div className="ml-[15px]">
                                <IconBtn>
                                    <Svg w={18} h={10}>
                                        <path d="M1 0v10M17 0v10M3 5h5M10 5h5" stroke="#777" />
                                        <path d="M4 2v6L1 5zM14 2v6l3-3z" fill="#777" />
                                    </Svg>
                                </IconBtn>
                            </div>
                            <div className="ml-[3px]">
                                <IconBtn>
                                    <Svg w={10} h={18}>
                                        <path d="M0 1h10M0 17h10" stroke="#777" />
                                        <path d="M2 3h6L5 8zM2 15h6l-3-5z" fill="#777" />
                                    </Svg>
                                </IconBtn>
                            </div>
                        </div>
                        <div className="mt-[4px] flex pl-[63px]">
                            <FieldLabel className="w-[63px]">R°</FieldLabel>
                            <FieldLabel className="ml-[14px] w-[63px]">T°</FieldLabel>
                        </div>
                    </div>
                    <div className="flex h-[54px] items-center border-b border-[#e0e0e0] bg-white pl-[13px]">
                        <span className="text-[24px] text-[#222]">Box 1*</span>
                        <div className="ml-auto">
                            <Caret />
                        </div>
                        <div className="ml-[23px] flex flex-col gap-[5px] text-[14px] leading-[16px] text-[#1a8ccb] underline">
                            <span>更新</span>
                            <span>创建</span>
                        </div>
                        <div className="mr-[5px] ml-[21px]">
                            <EditDoc />
                        </div>
                    </div>
                    <Section className="h-[51px]" label="Fill">
                        <div className="flex justify-end">
                            <Drop className="w-[51px]">
                                <FillSwatch />
                            </Drop>
                        </div>
                    </Section>
                    <Section className="h-[49px]" label="阴影">
                        <div className="flex justify-end gap-[16px]">
                            <Drop className="w-[51px]">
                                <ShadowIcon />
                            </Drop>
                            <Drop className="w-[51px]">
                                <FillSwatch />
                            </Drop>
                        </div>
                    </Section>
                    <Section className="h-[88px]" label="边框">
                        <div className="flex justify-end gap-[15px]">
                            <Drop className="w-[51px]">
                                <ThickIcon />
                            </Drop>
                            <Drop className="w-[51px]">
                                <PenIcon />
                            </Drop>
                            <Drop className="w-[51px]">
                                <DashIcon />
                            </Drop>
                        </div>
                        <div className="mt-[11px] flex justify-end gap-[15px]">
                            <Drop className="w-[51px]">
                                <Svg w={16} h={17}>
                                    <path d="M1 1h14v12M1 1v12" stroke="#888" strokeDasharray="2 1" />
                                    <path d="M0 15h16" stroke="#555" strokeWidth="2" />
                                </Svg>
                            </Drop>
                            <Drop className="w-[51px] bg-[#d7d7d7]">
                                <ArrowsIcon />
                            </Drop>
                        </div>
                    </Section>
                    <Section className="h-[50px]" label="圆角半径">
                        <div className="flex justify-end gap-[15px]">
                            <TextBox className="w-[51px]">0</TextBox>
                            <Drop className="w-[51px]">
                                <Svg w={16} h={17}>
                                    <path d="M1 16V6c0-3 2-5 5-5h9v15z" stroke="#666" strokeWidth="1.200" />
                                </Svg>
                            </Drop>
                        </div>
                    </Section>
                    <Section className="h-[49px]" label="不透明度">
                        <div className="flex items-center justify-end">
                            <TextBox className="w-[41px] text-[15px]">100</TextBox>
                            <span className="ml-[7px] w-[14px] text-[15px] text-[#444]">%</span>
                        </div>
                    </Section>
                    <Section className="h-[127px]" label="字体">
                        <div className="flex justify-end">
                            <Drop className="w-[222px] bg-white !pl-[4px] text-[14px] text-[#333]">Arial</Drop>
                        </div>
                        <div className="mt-[11px] flex justify-end gap-[16px]">
                            <Drop className="w-[156px] !pl-[10px] text-[14px] text-[#333]">Normal</Drop>
                            <Drop className="w-[50px] bg-white !pl-[4px] text-[14px] text-[#333]">13</Drop>
                        </div>
                        <div className="mt-[11px] flex justify-end gap-[15px]">
                            <BIU className="w-[91px]" />
                            <Drop className="w-[51px]">
                                <ColorA />
                            </Drop>
                            <Drop className="w-[50px]">
                                <ColorA dim />
                            </Drop>
                        </div>
                    </Section>
                    <Section className="h-[49px]" label="行距">
                        <div className="flex justify-end">
                            <Drop className="w-[50px] bg-white !pl-[4px] text-[14px] text-[#333]">--</Drop>
                        </div>
                    </Section>
                    <Section className="h-[49px]" label="Bullets">
                        <div className="flex justify-end">
                            <IconBtn>
                                <Svg w={17} h={12}>
                                    <path d="M0 1h3M0 9h3" stroke={BLUE} strokeWidth="2.500" />
                                    <path d="M6 1h11M6 9h11" stroke="#666" strokeWidth="2" />
                                </Svg>
                            </IconBtn>
                        </div>
                    </Section>
                </div>
                <div className="relative flex-1 border-l border-[#e6e6e6] bg-[#f3f3f3]">
                    <div className="absolute top-[9px] left-[9px]">
                        <Svg w={9} h={5}>
                            <path d="M0 5h9L4.500 0z" fill="#888" />
                        </Svg>
                    </div>
                    <div className="absolute top-[25px] left-[5px] flex h-[564px] w-[19px] items-center justify-center rounded-[3px] border border-[#aaa] bg-[#e4e4e4]">
                        <Svg w={9} h={9}>
                            <path d="M0 1h9M0 4.500h9M0 8h9" stroke="#777" />
                        </Svg>
                    </div>
                    <div className="absolute top-[694px] left-[9px]">
                        <Caret color="#888" />
                    </div>
                </div>
            </div>
        </div>
    )
}

export default function App() {
    return (
        <div className="relative h-[1041px] w-[1618px] overflow-hidden bg-white font-['Liberation_Sans','Noto_Sans_CJK_SC',sans-serif]">
            <div className="ml-[9px] flex h-[1029px] w-[1598px] flex-col overflow-hidden border-x border-b border-[#2b8fdc]">
                <TitleBar />
                <MenuBar />
                <Toolbar />
                <FormatBar />
                <div className="flex min-h-0 flex-1 bg-[#d7d7d7]">
                    <LeftPanel />
                    <Canvas />
                    <RightPanel />
                </div>
            </div>
            <div className="absolute top-[231px] left-[1183px] h-[57px] w-[428px] border-[5px] border-[#ff0000]" />
            <svg width={1618} height={1041} fill="none" className="pointer-events-none absolute inset-0">
                <path d="M624 358L1176 263" stroke="#ff0000" strokeWidth="5" />
                <path d="M1154 250L1180 263L1156 277" stroke="#ff0000" strokeWidth="5" />
            </svg>
        </div>
    )
}
